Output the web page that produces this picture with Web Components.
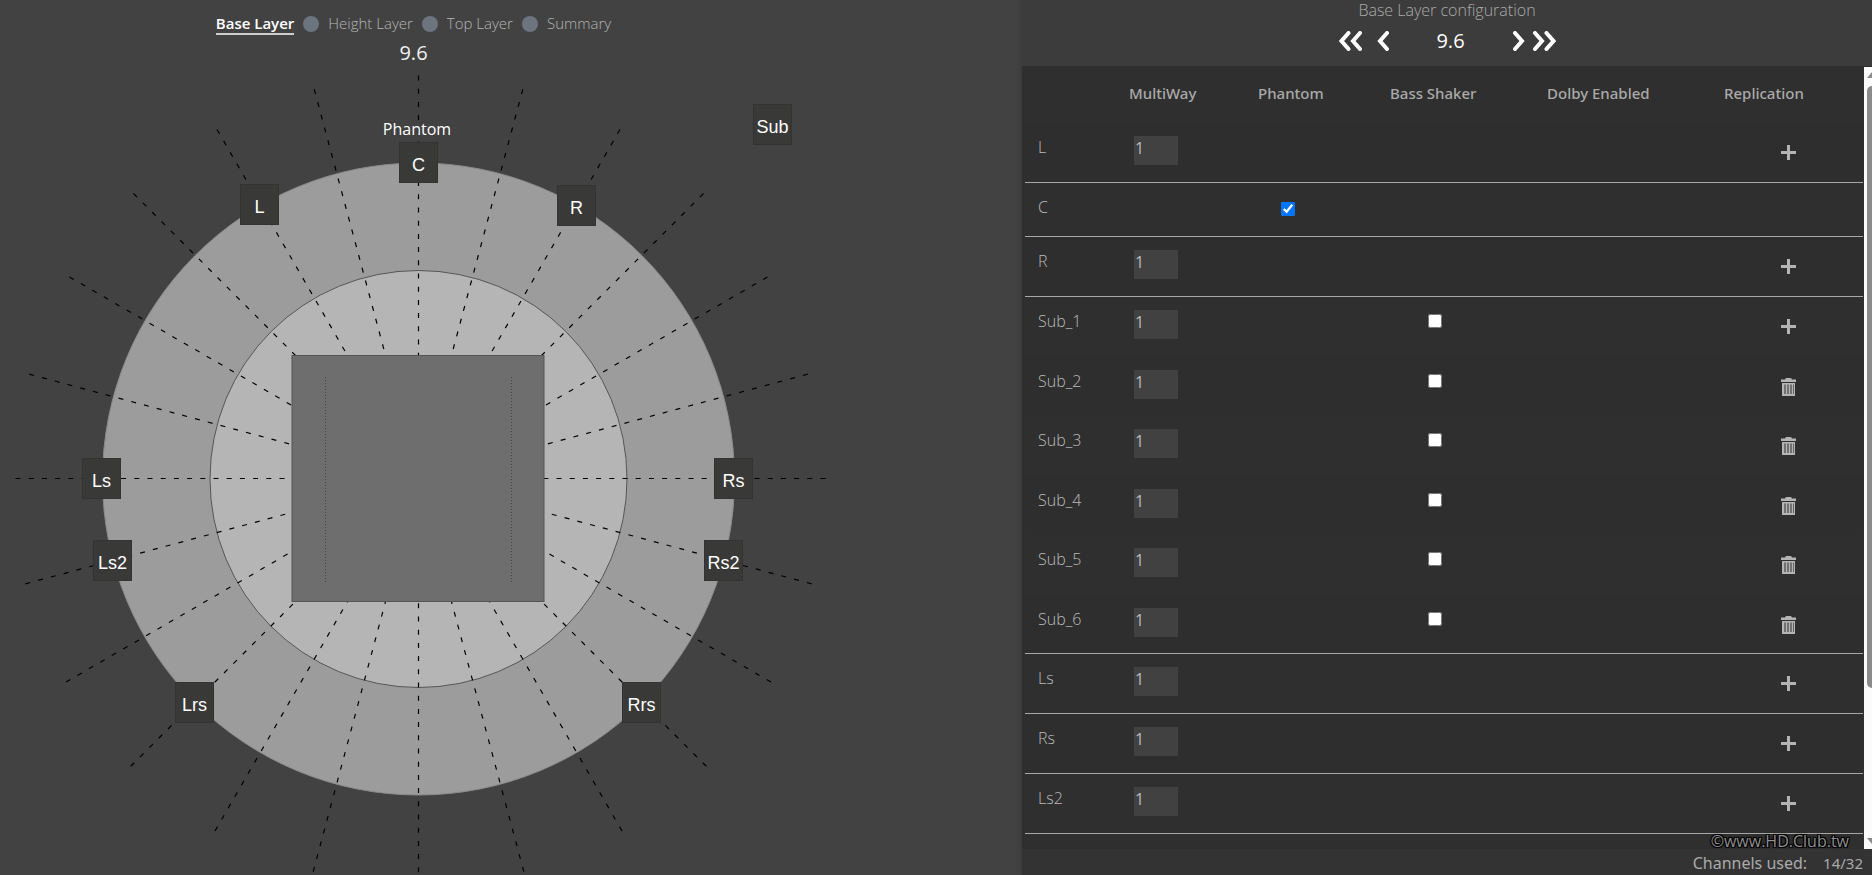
<!DOCTYPE html>
<html lang="en">
<head>
<meta charset="utf-8">
<title>Base Layer configuration</title>
<style>
  html, body { margin: 0; height: 100%; }
  body { background: #424242; color: #aaa; font: 16px/24px "Noto Sans", "Open Sans", sans-serif; overflow: hidden; }
</style>
</head>
<body>
<layout-app>
  <layer-view slot="view">
    <layer-steps slot="head"></layer-steps>
    <speaker-node style="--dx:-19px;--dy:-337px" name="C"></speaker-node>
    <speaker-node style="--dx:-178px;--dy:-295px" name="L"></speaker-node>
    <speaker-node style="--dx:139px;--dy:-294px" name="R"></speaker-node>
    <speaker-node style="--dx:335px;--dy:-375px" name="Sub"></speaker-node>
    <speaker-node style="--dx:-336px;--dy:-21px" name="Ls"></speaker-node>
    <speaker-node style="--dx:296px;--dy:-21px" name="Rs"></speaker-node>
    <speaker-node style="--dx:-325px;--dy:61px" name="Ls2"></speaker-node>
    <speaker-node style="--dx:286px;--dy:61px" name="Rs2"></speaker-node>
    <speaker-node style="--dx:-243px;--dy:203px" name="Lrs"></speaker-node>
    <speaker-node style="--dx:204px;--dy:203px" name="Rrs"></speaker-node>
  </layer-view>
  <config-panel slot="config">
    <layout-picker slot="picker"></layout-picker>
    <channel-table></channel-table>
  </config-panel>
</layout-app>

<script>
const define = (name, html, init) => customElements.define(name, class extends HTMLElement {
  constructor() {
    super();
    const t = document.createElement('template');
    t.innerHTML = html;
    this.attachShadow({ mode: 'open' }).append(t.content.cloneNode(true));
  }
  connectedCallback() { if (init) init(this, this.shadowRoot); }
});

define('layout-app', `
<style>
  :host { display: grid; grid-template-columns: minmax(0, 1022fr) minmax(0, 850fr); grid-template-rows: 100%; height: 100vh; }
</style>
<slot name="view"></slot><slot name="config"></slot>`);

define('layer-steps', `
<style>
  :host { display: block; }
  nav { display: flex; justify-content: center; align-items: center; padding-top: 13px; }
  a { color: #b4b4b4; text-decoration: none; font: 300 15px/20px "Open Sans", sans-serif; border-bottom: 2px solid transparent; }
  a[aria-current] { color: #fff; font-weight: 600; border-color: #ccc; }
  i { width: 16px; height: 16px; border-radius: 50%; background: #6c7480; margin: 0 9px; }
</style>
<nav aria-label="Layers">
  <a href="#base" aria-current="step">Base Layer</a><i></i>
  <a href="#height">Height Layer</a><i></i>
  <a href="#top">Top Layer</a><i></i>
  <a href="#summary">Summary</a>
</nav>`);

define('layer-view', `
<style>
  :host { display: flex; flex-direction: column; background: #424242; overflow: hidden; min-width: 0; }
  header { width: 827px; max-width: 100%; height: 72px; flex: none; text-align: center; }
  h1 { margin: 2px 0 0; font: 400 20px/32px "Open Sans", sans-serif; color: #f0f0f0; }
  .stage { position: relative; flex: 1; min-height: 0; overflow: hidden; --cx: 418px; --cy: 407px; }
  svg { display: block; }
  .tag { position: absolute; left: calc(var(--cx) - 1px); top: calc(var(--cy) - 362px); transform: translateX(-50%); color: #fff; font: 16px/24px "Open Sans", sans-serif; }
</style>
<header><slot name="head"></slot><h1>9.6</h1></header>
<div class="stage">
  <svg width="836" height="820" viewBox="0 0 836 820" aria-hidden="true">
    <circle cx="418.5" cy="407" r="316" fill="#9c9c9c" stroke="#8a8a8a"/>
    <circle cx="418.5" cy="407" r="208.5" fill="#b5b5b5" stroke="#555"/>
    <g id="rays" stroke="#000" stroke-width="1.2" stroke-dasharray="5 8.2"></g>
    <rect x="292" y="283.5" width="252" height="246" fill="#6e6e6e" stroke="#555"/>
    <g stroke="#444" stroke-dasharray="1 2"><path d="M325.5 305v205M511.500 305v205"/></g>
  </svg>
  <span class="tag">Phantom</span>
  <slot></slot>
</div>`, (el, root) => {
  const rays = root.getElementById('rays');
  for (let deg = 0; deg < 360; deg += 15) {
    const a = deg * Math.PI / 180, r = deg < 180 ? 407 : 403;
    const line = document.createElementNS('http://www.w3.org/2000/svg', 'line');
    line.setAttribute('x1', 418.5 + r * Math.cos(a));
    line.setAttribute('y1', 406.5 + r * Math.sin(a));
    line.setAttribute('x2', 418.5);
    line.setAttribute('y2', 406.5);
    rays.append(line);
  }
});

define('speaker-node', `
<style>
  :host { position: absolute; left: calc(var(--cx) + var(--dx)); top: calc(var(--cy) + var(--dy)); }
  button { display: block; width: 39px; height: 41px; padding: 4px 0 0; border: 1px solid #333; background: #393938; color: #fff;
    font: 18px/20px "Liberation Sans", Arial, sans-serif; text-align: center; white-space: nowrap; }
</style>
<button type="button"></button>`, (el, root) => { root.querySelector('button').textContent = el.getAttribute('name'); });

define('layout-picker', `
<style>
  :host { display: block; text-align: center; }
  h2 { margin: 0; font: 300 16px/20px "Open Sans", sans-serif; color: #aaa; }
  div { display: flex; justify-content: center; align-items: center; height: 42px; }
  button { display: flex; padding: 0; border: 0; background: none; }
  svg { fill: none; stroke: #fff; stroke-width: 4; stroke-linecap: round; stroke-linejoin: miter; }
  output { width: 124px; font: 20px/24px "Open Sans", sans-serif; color: #fff; }
  .far { margin-right: 15px; } .next { margin-right: 8px; }
</style>
<h2>Base Layer configuration</h2>
<div>
  <button class="far" aria-label="First"><svg width="23" height="20"><path d="M9.500 2 2.500 10l7 8M21 2l-7 8 7 8"/></svg></button>
  <button aria-label="Previous"><svg width="12" height="20"><path d="M10 2 3 10l7 8"/></svg></button>
  <output>9.6</output>
  <button class="next" aria-label="Next"><svg width="12" height="20"><path d="M2 2l7 8-7 8"/></svg></button>
  <button aria-label="Last"><svg width="23" height="20"><path d="M2 2l7 8-7 8M13.500 2l7 8-7 8"/></svg></button>
</div>`);

define('config-panel', `
<style>
  :host { display: flex; flex-direction: column; position: relative; min-width: 0; background: #2f2f2f; box-shadow: 0 0 6px rgba(0,0,0,.2); overflow: hidden; }
  header { height: 66px; flex: none; box-sizing: border-box; padding: 0 8px; background: #3c3c3c; }
  .body { flex: 1; min-height: 0; display: flex; overflow: hidden; }
  .rows { flex: 1; min-width: 0; overflow: hidden; padding: 0 1px 0 3px; }
  .bar { width: 8px; flex: none; margin-top: 1px; background: #fbfbfb; overflow: hidden; display: flex; flex-direction: column; align-items: flex-start; }
  .bar svg { flex: none; margin-left: 3px; fill: #8b8b8b; }
  .thumb { flex: none; width: 11px; height: 77%; margin-left: 3px; border-radius: 5px; background: #8b8b8b; }
  .gap { flex: 1; }
  footer { flex: none; display: flex; justify-content: flex-end; gap: 16px; padding-right: 9px; background: #333; height: 26px; font: 16px/28px "Noto Sans", sans-serif; color: #aaa; }
  .count { font-size: 15px; }
  .mark { position: absolute; right: 23px; bottom: 22px; font: 500 16px/24px "Open Sans", sans-serif; color: #8f8f8f;
    text-shadow: -1px -1px 0 #000, 1px -1px 0 #000, -1px 1px 0 #000, 1px 1px 0 #000, 0 0 3px #000; }
</style>
<header><slot name="picker"></slot></header>
<div class="body">
  <div class="rows"><slot></slot></div>
  <div class="bar" aria-hidden="true">
    <svg width="12" height="19"><path d="M0 11 5 5l5 6z"/></svg>
    <div class="thumb"></div><div class="gap"></div>
    <svg width="12" height="15"><path d="M0 4h10l-5 6z"/></svg>
  </div>
</div>
<footer><span>Channels used:</span><span class="count">14/32</span></footer>
<span class="mark">©www.HD.Club.tw</span>`);

define('channel-table', `
<style>
  :host { display: block; }
  table { width: 100%; table-layout: fixed; border-collapse: separate; border-spacing: 0; }
  th, td { padding: 0; text-align: left; vertical-align: top; box-sizing: border-box; }
  thead th { padding-top: 17px; font: 500 15px/20px "Noto Sans", sans-serif; color: #aaa; white-space: nowrap; }
  tbody th { padding: 14px 0 0 13px; font: 300 16px/20px "Open Sans", sans-serif; color: #bbb; }
  thead tr { height: 57px; }
  tbody tr { height: 60px; }
  tbody tr.slim { height: 54px; }
  tbody tr.member:nth-child(odd) { height: 59px; }
  tr.end > * { border-bottom: 1px solid #a8a8a8; }
  tbody tr:nth-child(odd) { background: #2e2e2e; }
  input { display: block; margin: 0; }
  input[type=text] { box-sizing: border-box; width: 44px; height: 29px; margin: 13px 0 0 5px; padding: 0 1px 5px; border: 0; background: #414141; color: #bbb; font: 16px/20px "Open Sans", sans-serif; }
  input[type=checkbox] { width: 14px; height: 14px; }
  .ph { padding: 19px 0 0 23px; }
  .bs { padding: 17px 0 0 38px; }
  .rp { padding: 21px 0 0 57px; }
  button { display: block; padding: 0; border: 0; background: none; }
  svg { display: block; fill: #b4b4b4; }
</style>
<table>
  <colgroup><col style="width:104px"><col style="width:129px"><col style="width:132px"><col style="width:157px"><col style="width:177px"><col style="width:139px"></colgroup>
  <thead><tr><td></td><th scope="col">MultiWay</th><th scope="col">Phantom</th><th scope="col">Bass Shaker</th><th scope="col">Dolby Enabled</th><th scope="col">Replication</th></tr></thead>
  <tbody></tbody>
</table>`, (el, root) => {
  const plus = '<button aria-label="Add"><svg width="15" height="17"><path d="M6 1h3v6h6v3H9v6H6v-6H0V7h6z"/></svg></button>';
  const bin = '<button aria-label="Remove"><svg width="15" height="18"><path fill-rule="evenodd" d="M5 0h5l1 1.500h4V4H0V1.500h4zM1 5h13v13H1zM3.500 6.500v9.500h1V6.500zM6.500 6.500v9.500h1V6.500zM9.500 6.500v9.500h1V6.500zM12 6.500v9.500h.6V6.500z"/></svg></button>';
  const rows = ['L', 'C', 'R', 'Sub_1', 'Sub_2', 'Sub_3', 'Sub_4', 'Sub_5', 'Sub_6', 'Ls', 'Rs', 'Ls2'];
  root.querySelector('tbody').innerHTML = rows.map(n => {
    const sub = n.startsWith('Sub'), c = n === 'C', end = !sub || n === 'Sub_6';
    return `<tr class="${end ? 'end' : ''} ${c ? 'slim' : ''} ${sub ? 'member' : ''}">
      <th scope="row"><label for="f-${n}">${n}</label></th>
      <td>${c ? '' : `<input type="text" id="f-${n}" value="1">`}</td>
      <td class="ph">${c ? `<input type="checkbox" id="f-${n}" checked>` : ''}</td>
      <td class="bs">${sub ? `<input type="checkbox" aria-label="${n} bass shaker">` : ''}</td>
      <td></td>
      <td class="rp">${c ? '' : sub && n !== 'Sub_1' ? bin : plus}</td></tr>`;
  }).join('');
});
</script>
</body>
</html>
